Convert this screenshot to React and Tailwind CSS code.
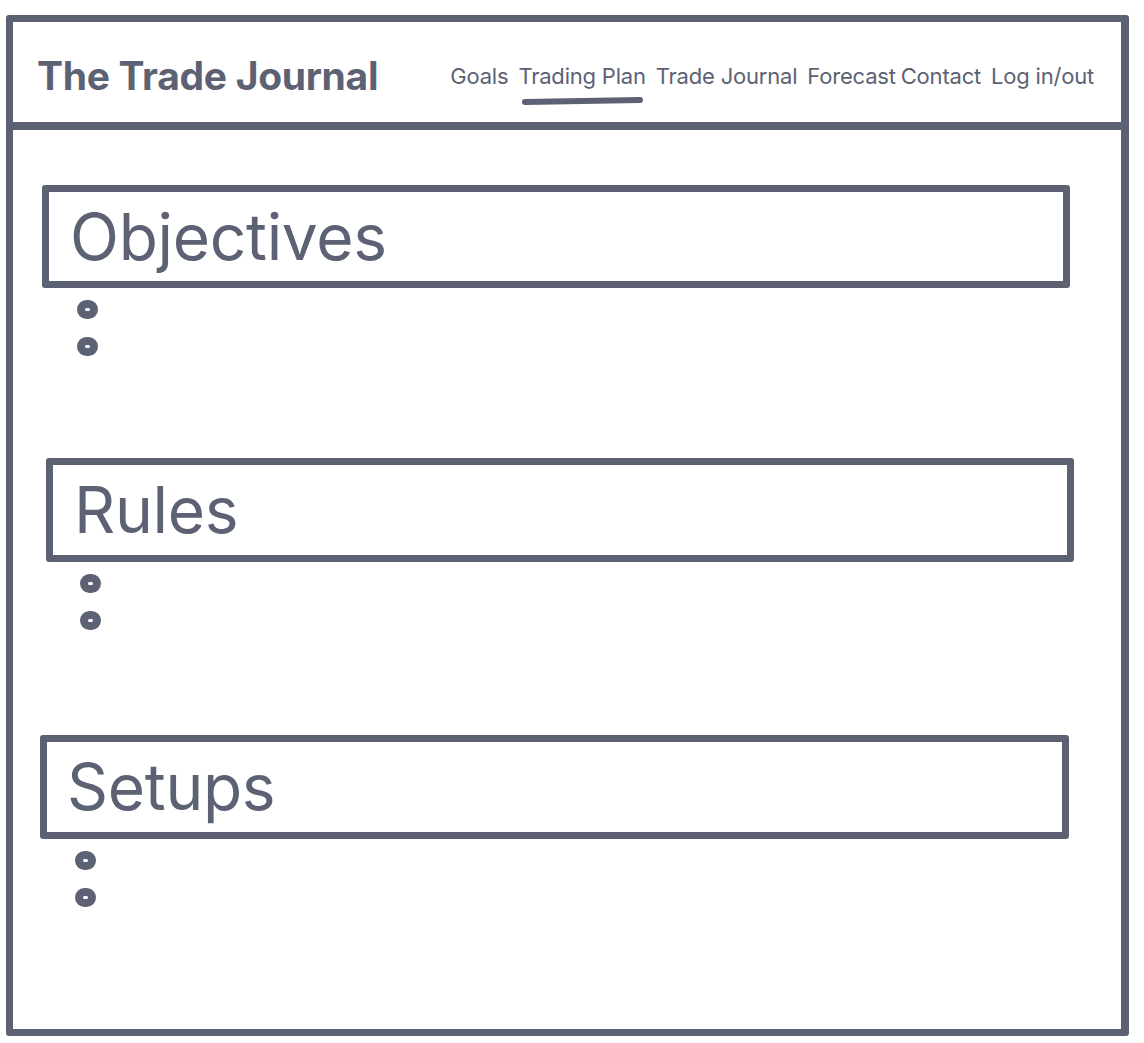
import React from 'react';

const NAV = [
    { label: 'Goals', gap: 'mr-[10px]' },
    { label: 'Trading Plan', gap: 'mr-[10px]', active: true },
    { label: 'Trade Journal', gap: 'mr-[10px]' },
    { label: 'Forecast', gap: 'mr-[5px]' },
    { label: 'Contact', gap: 'mr-[10px]' },
    { label: 'Log in/out', gap: '' },
];

// hand-drawn sketch: each section sits a few px off the others
const SECTIONS = [
    { title: 'Objectives', box: 'ml-[29px] mt-[55px] w-[1028px] h-[103px]', text: 'pl-[21px]', bullets: 'ml-[64px]' },
    { title: 'Rules', box: 'ml-[33px] mt-[102px] w-[1028px] h-[104px]', text: 'pl-[21px]', bullets: 'ml-[67px]' },
    { title: 'Setups', box: 'ml-[27px] mt-[105px] w-[1029px] h-[104px]', text: 'pl-[20px]', bullets: 'ml-[62px]' },
];

const Bullet = () => (
    <div className="w-[21px] h-[19px] rounded-full border-[8px] border-[#5c6273]" />
);

const Section = ({ title, box, text, bullets }) => (
    <section>
        <div className={`${box} border-[7px] border-[#5c6273] rounded-[3px] flex items-center`}>
            <h2 className={`${text} text-[64px] leading-none text-[#5c6273] font-normal tracking-[-0.3px]`}>{title}</h2>
        </div>
        <div className={`${bullets} mt-[12px] flex flex-col gap-[18px]`}>
            <Bullet />
            <Bullet />
        </div>
    </section>
);

const App = () => {
    return (
        <div className="min-h-[1043px] bg-white pt-[15px] pl-[6px]" style={{ fontFamily: 'Inter, "Liberation Sans", sans-serif' }}>
            <div className="w-[1123px] h-[1021px] border-[7px] border-r-[8px] border-[#5c6273] rounded-[3px] flex flex-col">
                <header className="h-[108px] border-b-[8px] border-[#5c6273] flex items-center justify-between pl-[24px] pr-[27px]">
                    <h1 className="text-[39px] font-bold text-[#5c6273] tracking-[-0.3px] mt-[9px]">The Trade Journal</h1>
                    <nav className="flex items-center text-[22px] text-[#5c6273] tracking-[-0.2px] mt-[8px]">
                        {NAV.map(item => (
                            <div key={item.label} className={`relative ${item.gap}`}>
                                <span>{item.label}</span>
                                {item.active && (
                                    <div className="absolute left-[4px] right-[2px] top-[38px] h-[6px] rounded-full bg-[#5c6273] -rotate-1" />
                                )}
                            </div>
                        ))}
                    </nav>
                </header>
                <main className="flex flex-col">
                    {SECTIONS.map(s => (
                        <Section key={s.title} {...s} />
                    ))}
                </main>
            </div>
        </div>
    );
};

export default App;
